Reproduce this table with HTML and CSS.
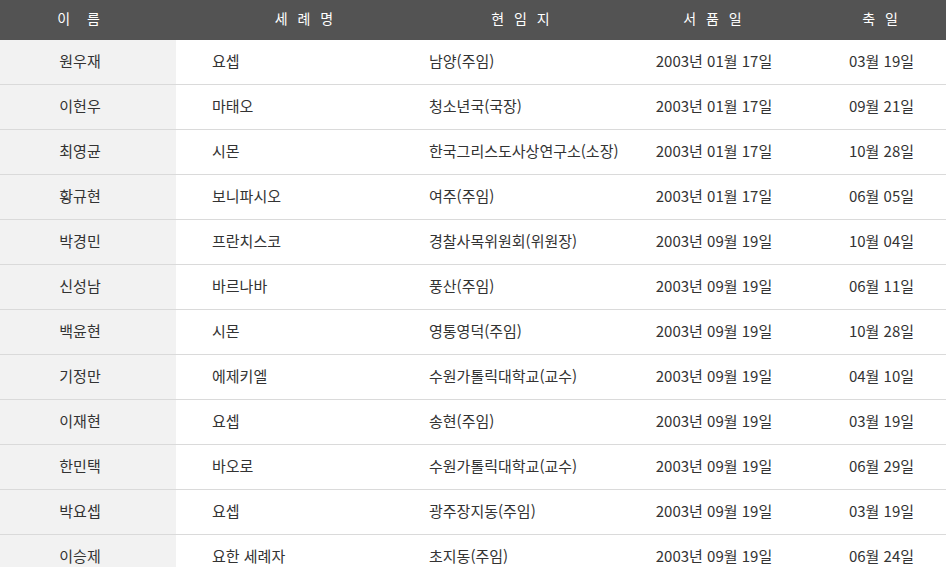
FILE: index.html
```html
<!DOCTYPE html>
<html lang="ko">
<head>
<meta charset="utf-8">
<link rel="stylesheet" href="styles.css">
</head>
<body>
<div class="table">
  <div class="row head">
    <div class="c c1">이&nbsp; 름</div>
    <div class="c c2">세 례 명</div>
    <div class="c c3">현 임 지</div>
    <div class="c c4">서 품 일</div>
    <div class="c c5">축 일</div>
  </div>
  <div class="row"><div class="c c1">원우재</div><div class="c c2">요셉</div><div class="c c3">남양(주임)</div><div class="c c4">2003년 01월 17일</div><div class="c c5">03월 19일</div></div>
  <div class="row"><div class="c c1">이헌우</div><div class="c c2">마태오</div><div class="c c3">청소년국(국장)</div><div class="c c4">2003년 01월 17일</div><div class="c c5">09월 21일</div></div>
  <div class="row"><div class="c c1">최영균</div><div class="c c2">시몬</div><div class="c c3">한국그리스도사상연구소(소장)</div><div class="c c4">2003년 01월 17일</div><div class="c c5">10월 28일</div></div>
  <div class="row"><div class="c c1">황규현</div><div class="c c2">보니파시오</div><div class="c c3">여주(주임)</div><div class="c c4">2003년 01월 17일</div><div class="c c5">06월 05일</div></div>
  <div class="row"><div class="c c1">박경민</div><div class="c c2">프란치스코</div><div class="c c3">경찰사목위원회(위원장)</div><div class="c c4">2003년 09월 19일</div><div class="c c5">10월 04일</div></div>
  <div class="row"><div class="c c1">신성남</div><div class="c c2">바르나바</div><div class="c c3">풍산(주임)</div><div class="c c4">2003년 09월 19일</div><div class="c c5">06월 11일</div></div>
  <div class="row"><div class="c c1">백윤현</div><div class="c c2">시몬</div><div class="c c3">영통영덕(주임)</div><div class="c c4">2003년 09월 19일</div><div class="c c5">10월 28일</div></div>
  <div class="row"><div class="c c1">기정만</div><div class="c c2">에제키엘</div><div class="c c3">수원가톨릭대학교(교수)</div><div class="c c4">2003년 09월 19일</div><div class="c c5">04월 10일</div></div>
  <div class="row"><div class="c c1">이재현</div><div class="c c2">요셉</div><div class="c c3">송현(주임)</div><div class="c c4">2003년 09월 19일</div><div class="c c5">03월 19일</div></div>
  <div class="row"><div class="c c1">한민택</div><div class="c c2">바오로</div><div class="c c3">수원가톨릭대학교(교수)</div><div class="c c4">2003년 09월 19일</div><div class="c c5">06월 29일</div></div>
  <div class="row"><div class="c c1">박요셉</div><div class="c c2">요셉</div><div class="c c3">광주장지동(주임)</div><div class="c c4">2003년 09월 19일</div><div class="c c5">03월 19일</div></div>
  <div class="row"><div class="c c1">이승제</div><div class="c c2">요한 세례자</div><div class="c c3">초지동(주임)</div><div class="c c4">2003년 09월 19일</div><div class="c c5">06월 24일</div></div>
</div>
</body>
</html>
```
FILE: styles.css
```css
html, body {
  margin: 0;
  padding: 0;
  background: #fff;
}
body {
  font-family: "Noto Sans CJK KR", "Noto Sans", sans-serif;
  font-size: 15px;
  color: #333;
}
.table {
  width: 946px;
}
.row {
  display: grid;
  grid-template-columns: 176px 253px 182px 206px 129px;
  height: 44px;
  border-bottom: 1px solid #dadada;
}
.c {
  display: flex;
  align-items: center;
  white-space: nowrap;
  padding-bottom: 3px;
}
.c1 {
  background: #f2f2f2;
  justify-content: center;
  padding-right: 16px;
}
.c2 {
  padding-left: 36px;
}
.c3 {
  padding-left: 0;
}
.c4, .c5 {
  justify-content: center;
}
.head {
  height: 40px;
  border-bottom: 0;
  background: #535353;
  color: #fff;
}
.head .c {
  justify-content: center;
  font-size: 14px;
  letter-spacing: 3px;
  padding-left: 0;
  padding-bottom: 5px;
  background: transparent;
}
.head .c1 {
  padding-right: 16px;
}
.head .c2 {
  padding-left: 6px;
}
.head .c3 {
  padding-left: 4px;
}
```
